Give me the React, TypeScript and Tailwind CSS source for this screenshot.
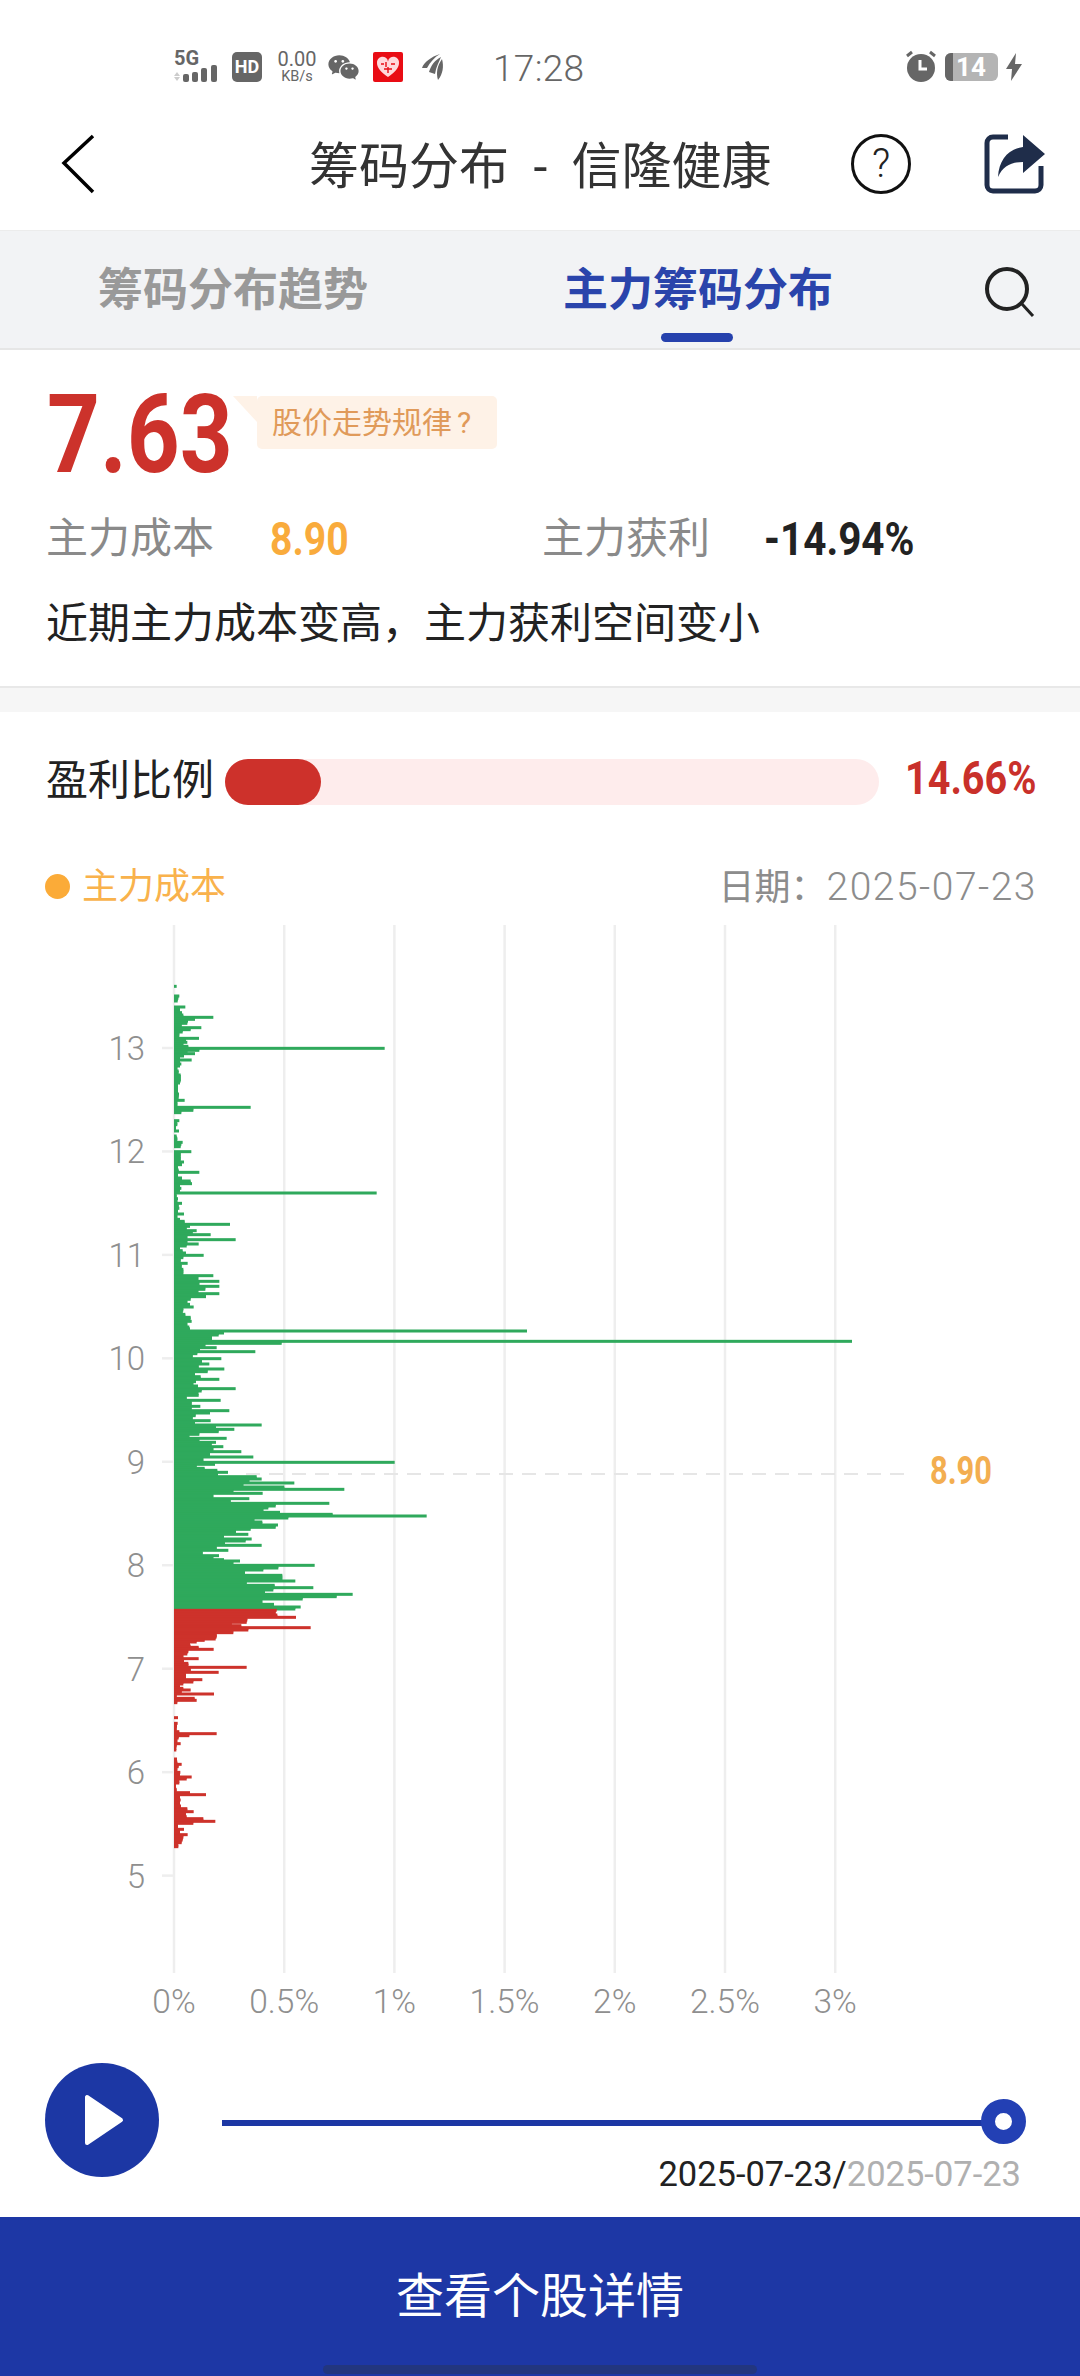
import React from "react";
import { RiWechatFill } from "react-icons/ri";

type P = [number, number];
const a: P[] = [[79,230],[108,238],[115,235],[123,233],[141,256],[152,240],[158,246],[165,250],[172,340],[178,285],[183,264],[190,262],[196,245],[203,304],[209,272],[216,248],[222,238],[235,297],[241,258],[247,262],[253,250],[259,265],[265,854],[271,298],[277,262],[281,285],[288,252],[294,240],[300,275],[306,240],[312,244],[318,240],[325,232],[333,236],[345,242],[351,242],[357,242],[363,242],[369,240],[378,234],[384,234],[390,234],[402,237],[408,236],[421,254],[428,232],[435,232],[442,452],[451,280],[458,244],[482,238],[494,232],[500,228],[513,237],[528,230],[535,232],[547,248],[553,244],[560,242],[575,274],[582,242],[590,242],[597,242],[606,252],[614,246],[622,234],[630,236],[637,298],[645,234],[654,246],[663,272],[671,276],[678,240],[685,244],[692,240],[699,830],[709,230],[716,234],[723,232],[730,246],[738,236],[745,238],[752,234],[762,252],[770,232],[778,240],[784,254],[793,390],[799,270],[805,260],[812,290],[818,278],[824,332],[831,262],[839,407],[845,262],[852,296],[858,260],[865,240],[872,248],[879,258],[886,311],[893,250]];
const b: P[] = [[0,242],[10,263],[19,245],[28,250],[36,250],[47,340],[55,295],[64,358],[71,298],[79,358],[88,316],[94,295],[101,358],[110,318],[118,272],[127,262],[133,270],[141,281],[150,250],[157,248],[163,256],[172,272],[184,275],[194,262],[201,268],[207,270],[213,1281],[219,372],[225,356],[232,336],[238,336],[244,2256],[250,545],[256,316],[263,350],[269,300],[275,466],[281,292],[288,278],[296,364],[304,306],[312,328],[320,296],[327,373],[335,323],[342,285],[350,302],[358,358],[365,288],[371,280],[378,294],[386,407],[393,305],[400,295],[406,296],[413,260],[421,362],[430,275],[439,301],[445,275],[452,388],[459,330],[467,287],[475,278],[482,332],[489,285],[495,485],[502,348],[508,403],[515,356],[523,298],[531,268],[535,380],[542,298],[547,348],[553,335],[560,370],[567,340],[575,424],[582,330],[591,460],[599,310],[607,884],[613,345],[619,290],[625,314],[631,352],[637,384],[645,354],[650,470],[657,485],[663,448],[669,583],[675,430],[681,553],[688,733],[694,400],[700,488],[708,340],[716,448],[722,392],[730,688],[738,527],[744,505],[750,490],[757,540],[763,698],[768,980],[774,565],[780,463],[786,487],[795,534],[802,527],[808,452],[815,408],[823,445],[831,372],[837,455],[843,437],[849,375],[856,485],[863,350],[871,385],[880,308],[887,357],[893,340],[899,372]];
const c: P[] = [[3,420],[10,400],[16,644],[24,535],[30,490],[37,435],[46,547],[55,547],[63,586],[70,440],[76,524],[83,640],[90,520],[96,495],[103,758],[110,710],[117,608],[125,487],[133,522],[141,602],[147,586],[151,530],[157,527],[165,532],[172,588],[180,442],[187,440],[192,395],[197,424],[203,632],[210,445],[218,400],[224,350],[231,350],[237,347],[241,314],[246,290],[252,270],[258,272],[262,296],[268,341],[275,265],[282,262],[290,250],[296,296],[303,252],[310,265],[316,265],[322,440],[330,272],[337,356],[345,258],[352,258],[359,307],[366,280],[372,250],[379,240],[385,250],[390,272],[397,245],[402,342],[409,230],[415,284],[421,290],[428,232],[473,234],[490,233],[498,231],[505,230],[515,238],[521,350],[527,268],[534,236],[541,232],[551,242],[558,230],[570,229],[597,231],[606,232],[613,245],[620,236],[627,232],[637,241],[644,240],[651,275],[657,260],[669,238],[678,228],[688,230],[698,270],[704,318],[712,240],[720,242],[730,240],[738,243],[746,262],[755,281],[763,258],[770,260],[776,310],[784,346],[790,280],[797,234],[808,252],[816,240],[824,263],[832,250],[840,248],[848,245],[860,235]];

const rows = [
  ...a.map(([y, e]) => [960 + y / 3, 100 + e / 3 - 174]),
  ...b.map(([y, e]) => [1260 + y / 3, 100 + e / 3 - 174]),
  ...c.map(([y, e]) => [1560 + y / 3, 100 + e / 3 - 174]),
];

const X0 = 174;
const GREEN = "#2fa95c";
const RED = "#cd322b";

function Chart() {
  const yLabels = [13, 12, 11, 10, 9, 8, 7, 6, 5];
  const xLabels = ["0%", "0.5%", "1%", "1.5%", "2%", "2.5%", "3%"];
  return (
    <svg width={1080} height={1125} viewBox="0 905 1080 1125" className="block">
      {xLabels.map((l, i) => (
        <line key={l} x1={X0 + 110.2 * i} x2={X0 + 110.2 * i} y1={925} y2={1973} stroke="#eeeeee" strokeWidth={2.5} />
      ))}
      {yLabels.map((n, i) => {
        const y = 1048 + 103.45 * i;
        return (
          <g key={n}>
            <line x1={162} x2={174} y1={y} y2={y} stroke="#eeeeee" strokeWidth={2.5} />
            <text x={145} y={y + 12} textAnchor="end" fontSize={33} fontWeight={300} fill="#8f8f8f" fontFamily="Roboto, sans-serif">{n}</text>
          </g>
        );
      })}
      {xLabels.map((l, i) => (
        <text key={l} x={X0 + 110.2 * i} y={2013} textAnchor="middle" fontSize={33.5} fontWeight={300} fill="#8f8f8f" fontFamily="Roboto, sans-serif">{l}</text>
      ))}
      <line x1={246} x2={905} y1={1474} y2={1474} stroke="#e6e6e6" strokeWidth={2} strokeDasharray="14 9" />
      {rows.map(([y, w], i) => {
        const color = y >= 1609.6 ? RED : GREEN;
        const next = rows[i + 1];
        const fill = next && next[0] - y <= 4.5 ? (
          <rect x={X0} y={y} width={Math.min(w, next[1])} height={next[0] - y} fill={next[0] >= 1609.6 && y < 1609.6 ? RED : color} />
        ) : null;
        return (
          <g key={i}>
            <rect x={X0} y={y - 1.5} width={w} height={3} fill={color} />
            {fill}
          </g>
        );
      })}
      <text x={930} y={1484} fontSize={38} fontWeight={700} fill="#f3ae50" textLength={62} lengthAdjust="spacingAndGlyphs" fontFamily="Roboto, sans-serif">8.90</text>
    </svg>
  );
}

function Signal() {
  return (
    <div className="relative w-[46px] h-[30px]">
      <span className="absolute left-0 top-[-6px] text-[20px] font-bold text-[#666666] leading-[24px]">5G</span>
      <svg width={46} height={30} viewBox="0 0 46 30" className="absolute left-0 top-0">
        <path d="M3 20l-3 4h6zM0 25h6l-3 4z" fill="#cccccc" />
        <rect x={9} y={22} width={6} height={8} rx={2} fill="#666666" />
        <rect x={18} y={20} width={6} height={10} rx={2} fill="#666666" />
        <rect x={27} y={16} width={6} height={14} rx={2} fill="#666666" />
        <rect x={37} y={13} width={6} height={17} rx={2} fill="#666666" />
      </svg>
    </div>
  );
}

function StatusBar() {
  return (
    <div className="h-[110px] flex items-start pt-[52px] pl-[174px] pr-[58px] text-[#666666]">
      <Signal />
      <div className="ml-[12px] w-[30px] h-[30px] rounded-[5px] bg-[#666666] text-white text-[18px] font-bold flex items-center justify-center leading-none">HD</div>
      <div className="ml-[13px] mt-[-3px] w-[44px] flex flex-col items-center">
        <span className="text-[20px] leading-[20px]">0.00</span>
        <span className="text-[14.500px] leading-[15px]">KB/s</span>
      </div>
      <RiWechatFill className="ml-[8px] mt-[-1px] text-[#666666]" size={33} />
      <div className="ml-[13px] w-[30px] h-[30px] bg-[#e90c14] rounded-[2px] flex items-center justify-center">
        <svg width={24} height={22} viewBox="0 0 24 22">
          <path d="M12 21C5 16 1 12 1 7a5.500 5.500 0 0 1 11-1.500A5.500 5.500 0 0 1 23 7c0 5-4 9-11 14z" fill="#ffd9dc" />
          <path d="M5 8h3M10 6v5M15 8h4M8 13h8M12 11v6" stroke="#e90c14" strokeWidth={1.4} />
        </svg>
      </div>
      <svg width={24} height={30} viewBox="0 0 24 30" className="ml-[18px]">
        <path d="M1 16C3 10 10 5 19 2c-5 3-10 8-13 14zM8 20C10 13 14 8 20 5c-2 5-5 10-6 17zM17 28c-2-7-1-14 4-21 2 7 1 15-4 21z" fill="#666666" />
      </svg>
      <span className="ml-[48px] mt-[-3px] text-[37px] leading-[40px] font-light tracking-[0.3px]">17:28</span>
      <div className="flex-1" />
      <svg width={34} height={32} viewBox="0 0 34 32" className="mt-[-2px]">
        <circle cx={17} cy={18} r={14} fill="#666666" />
        <path d="M16 10v9h7" stroke="#ffffff" strokeWidth={3} fill="none" />
        <path d="M3 6l5-4M31 6l-5-4" stroke="#666666" strokeWidth={3} />
      </svg>
      <div className="ml-[7px] mt-[1px] relative w-[53px] h-[28px] rounded-[6px] bg-[#b4b4b4] flex items-center">
        <div className="w-[8px] h-full rounded-l-[6px] bg-[#666666]" />
        <span className="ml-[3px] text-[26px] leading-[28px] font-bold text-white">14</span>
      </div>
      <svg width={16} height={28} viewBox="0 0 16 28" className="ml-[8px] mt-[1px]">
        <path d="M10 0L0 16h6L5 28 16 11H9z" fill="#666666" />
      </svg>
    </div>
  );
}

function Header() {
  return (
    <div className="relative h-[120px] flex items-start pt-[24px] pl-[60px] pr-[34px] bg-white">
      <svg width={36} height={60} viewBox="0 0 36 60">
        <path d="M33 2L4 29l29 29" stroke="#000000" strokeWidth={3.5} fill="none" />
      </svg>
      <span className="ml-[213px] mt-[4px] text-[50px] leading-[58px] text-[#333333] [word-spacing:12px] whitespace-nowrap">筹码分布 - 信隆健康</span>
      <div className="flex-1" />
      <div className="w-[60px] h-[60px] rounded-full border-[3px] border-[#111111] flex items-center justify-center text-[40px] text-[#222222] font-light leading-none">?</div>
      <svg width={62} height={60} viewBox="0 0 62 60" className="ml-[73px]">
        <path d="M24 3H9a6 6 0 0 0-6 6v42a6 6 0 0 0 6 6h42a6 6 0 0 0 6-6V32" stroke="#1f2d4a" strokeWidth={5} fill="none" />
        <path d="M39 1l22 19-22 19V28c-12 0-20 4-25 15 1-17 10-28 25-30z" fill="#1f2d4a" />
      </svg>
    </div>
  );
}

function Tabs() {
  return (
    <div className="h-[120px] bg-[#f2f3f5] border-t border-b-2 border-t-[#ececec] border-b-[#e6e6e6] flex items-start pl-[98px] pr-[44px] pt-[35px]">
      <span className="text-[45px] leading-[50px] font-bold text-[#999999] whitespace-nowrap">筹码分布趋势</span>
      <div className="ml-[195px] relative">
        <span className="block text-[45px] leading-[50px] font-bold text-[#2a44ab] whitespace-nowrap">主力筹码分布</span>
        <div className="absolute left-[98px] top-[67px] w-[72px] h-[9px] rounded-[5px] bg-[#2641ad]" />
      </div>
      <div className="flex-1" />
      <svg width={52} height={50} viewBox="0 0 52 50" className="mt-[1px]">
        <circle cx={23} cy={22} r={20} stroke="#222222" strokeWidth={4} fill="none" />
        <path d="M38 37l11 12" stroke="#222222" strokeWidth={3} />
      </svg>
    </div>
  );
}

const narrow = "inline-block origin-left whitespace-nowrap font-bold";

function Summary() {
  return (
    <div className="h-[336px] bg-white pl-[46px]">
      <div className="flex items-start pt-[22px]">
        <span className={`${narrow} scale-x-[0.84] text-[110px] leading-[126px] text-[#cc322b] ml-[1px] w-[186px]`}>7.63</span>
        <div className="relative ml-[24px] mt-[24px] w-[240px] h-[53px] bg-[#fef2e7] rounded-[5px] flex items-center pl-[15px] text-[30px] leading-none text-[#e09a5a] whitespace-nowrap">
          <div className="absolute left-[-24px] top-0 w-0 h-0 border-t-[26px] border-t-[#fef2e7] border-l-[24px] border-l-transparent" />
          股价走势规律<span className="ml-[5px]">?</span>
        </div>
      </div>
      <div className="flex items-center mt-[11px] h-[60px]">
        <span className="w-[224px] text-[42px] text-[#8a8a8a] leading-[50px]">主力成本</span>
        <span className="w-[272px]">
          <span className={`${narrow} scale-x-[0.85] text-[46px] leading-[50px] text-[#f9ab3c]`}>8.90</span>
        </span>
        <span className="w-[222px] text-[42px] text-[#8a8a8a] leading-[50px]">主力获利</span>
        <span className={`${narrow} scale-x-[0.88] text-[46px] leading-[50px] text-[#222222]`}>-14.94%</span>
      </div>
      <div className="mt-[30px] text-[42px] leading-[50px] text-[#222222]">{"近期主力成本变高\uFF0C主力获利空间变小"}</div>
    </div>
  );
}

function Profit() {
  return (
    <div className="h-[134px] flex items-start pl-[46px] pt-[47px]">
      <span className="text-[42px] leading-[50px] text-[#222222] w-[179px] mt-[-3px]">盈利比例</span>
      <div className="w-[654px] h-[46px] rounded-[23px] bg-[#feecec]">
        <div className="w-[96px] h-full rounded-[23px] bg-[#cd312b]" />
      </div>
      <span className={`${narrow} scale-x-[0.86] ml-[26px] mt-[-6px] text-[46px] leading-[50px] text-[#c9302a]`}>14.66%</span>
    </div>
  );
}

function Legend() {
  return (
    <div className="h-[59px] flex items-start pl-[45px] pr-[43px] pt-[21px] bg-white">
      <div className="w-[25px] h-[25px] rounded-full bg-[#fbab38] mt-[7px]" />
      <span className="ml-[12px] text-[36px] leading-[40px] text-[#f9b24c]">主力成本</span>
      <div className="flex-1" />
      <span className="text-[36px] leading-[40px] text-[#8c8c8c] whitespace-nowrap">
        {"日期\uFF1A"}
        <span className="text-[39px] font-light tracking-[1.5px]">2025-07-23</span>
      </span>
    </div>
  );
}

function Player() {
  return (
    <div className="h-[187px] relative pl-[45px] pt-[33px] flex items-start">
      <div className="w-[114px] h-[114px] rounded-full bg-[#1c37a4] flex items-center justify-center">
        <svg width={40} height={52} viewBox="0 0 40 52" className="ml-[4px]">
          <path d="M3 3v46l34-23z" fill="#ffffff" stroke="#ffffff" strokeWidth={4} strokeLinejoin="round" />
        </svg>
      </div>
      <div className="ml-[63px] mt-[57px] w-[770px] h-[6px] bg-[#1c37a4]" />
      <div className="absolute left-[981px] top-[69px] w-[45px] h-[45px] rounded-full border-[14px] border-[#2340b4] bg-white" />
      <div className="absolute right-[59px] top-[124px] text-[34.500px] leading-[40px] text-[#222222] whitespace-nowrap">
        2025-07-23/<span className="text-[#b0b0b0]">2025-07-23</span>
      </div>
    </div>
  );
}

function Bottom() {
  return (
    <div className="relative h-[159px] bg-[#1d37a5] flex items-start justify-center pt-[50px]">
      <span className="text-[48px] leading-[60px] text-white">查看个股详情</span>
      <div className="absolute left-[323px] top-[148px] w-[434px] h-[9px] rounded-[5px] bg-[#22367f]" />
    </div>
  );
}

export default function App() {
  return (
    <div className="w-[1080px] h-[2376px] bg-white overflow-hidden flex flex-col font-['Roboto','Noto_Sans_CJK_SC',sans-serif]">
      <StatusBar />
      <Header />
      <Tabs />
      <Summary />
      <div className="h-[26px] bg-[#f6f6f6] border-t-2 border-t-[#e8e8e8]" />
      <Profit />
      <Legend />
      <Chart />
      <Player />
      <Bottom />
    </div>
  );
}
